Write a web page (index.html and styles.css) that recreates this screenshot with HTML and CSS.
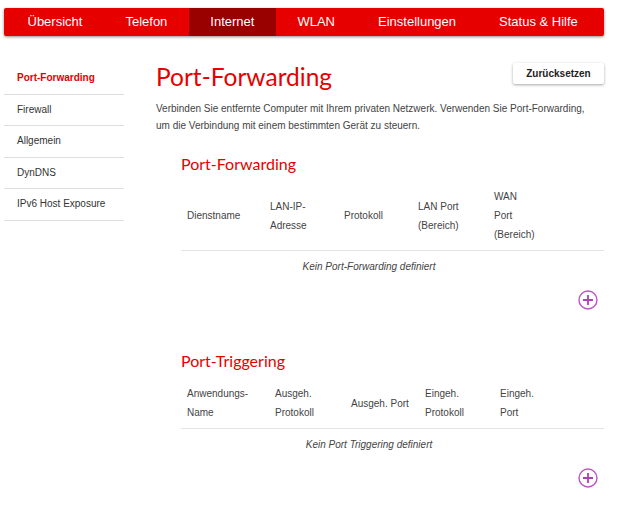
FILE: index.html
```html
<!DOCTYPE html>
<html lang="de">
<head>
<meta charset="utf-8">
<title>Port-Forwarding</title>
<link rel="stylesheet" href="styles.css">
</head>
<body>
<nav class="topnav">
  <a class="nav-item">Übersicht</a>
  <a class="nav-item">Telefon</a>
  <a class="nav-item active">Internet</a>
  <a class="nav-item">WLAN</a>
  <a class="nav-item">Einstellungen</a>
  <a class="nav-item">Status &amp; Hilfe</a>
</nav>
<div class="layout">
  <aside class="sidebar">
    <a class="side-item active">Port-Forwarding</a>
    <a class="side-item">Firewall</a>
    <a class="side-item">Allgemein</a>
    <a class="side-item">DynDNS</a>
    <a class="side-item">IPv6 Host Exposure</a>
  </aside>
  <main class="content">
    <div class="title-row">
      <h1 class="page-title">Port-Forwarding</h1>
      <button class="btn">Zurücksetzen</button>
    </div>
    <p class="intro">Verbinden Sie entfernte Computer mit Ihrem privaten Netzwerk. Verwenden Sie Port-Forwarding, um die Verbindung mit einem bestimmten Gerät zu steuern.</p>

    <section class="section">
      <h2 class="section-title">Port-Forwarding</h2>
      <table class="data">
        <colgroup>
          <col class="w83"><col class="w74"><col class="w74"><col class="w76"><col class="w69"><col class="w47">
        </colgroup>
        <thead>
          <tr>
            <th>Dienstname</th>
            <th>LAN-IP-<br>Adresse</th>
            <th>Protokoll</th>
            <th>LAN Port<br>(Bereich)</th>
            <th>WAN<br>Port<br>(Bereich)</th>
            <th></th>
          </tr>
        </thead>
        <tbody>
          <tr><td class="empty" colspan="5">Kein Port-Forwarding definiert</td><td></td></tr>
        </tbody>
      </table>
      <div class="add-row"><span class="add-btn"><svg width="20" height="20" viewBox="0 0 20 20"><circle cx="10" cy="10" r="9" fill="none" stroke="#c054c6" stroke-width="1.4"/><path d="M10 5v10M5 10h10" stroke="#b040b8" stroke-width="1.8"/></svg></span></div>
    </section>

    <section class="section second">
      <h2 class="section-title">Port-Triggering</h2>
      <table class="data">
        <colgroup>
          <col class="w88"><col class="w76"><col class="w74"><col class="w75"><col class="w63"><col class="w47">
        </colgroup>
        <thead>
          <tr>
            <th>Anwendungs-<br>Name</th>
            <th>Ausgeh.<br>Protokoll</th>
            <th>Ausgeh. Port</th>
            <th>Eingeh.<br>Protokoll</th>
            <th>Eingeh.<br>Port</th>
            <th></th>
          </tr>
        </thead>
        <tbody>
          <tr><td class="empty" colspan="5">Kein Port Triggering definiert</td><td></td></tr>
        </tbody>
      </table>
      <div class="add-row"><span class="add-btn"><svg width="20" height="20" viewBox="0 0 20 20"><circle cx="10" cy="10" r="9" fill="none" stroke="#c054c6" stroke-width="1.4"/><path d="M10 5v10M5 10h10" stroke="#b040b8" stroke-width="1.8"/></svg></span></div>
    </section>
  </main>
</div>
</body>
</html>
```

FILE: styles.css
```css
* { box-sizing: border-box; }
body {
  margin: 0;
  font-family: "Liberation Sans", Arial, sans-serif;
  color: #333;
  background: #fff;
}
.topnav {
  display: flex;
  margin: 8px 13px 0 4px;
  padding-left: 2px;
  height: 28px;
  background: #e60000;
  border-radius: 2px;
  box-shadow: 0 1px 3px rgba(0,0,0,0.45);
}
.nav-item {
  flex: none;
  white-space: nowrap;
  padding: 0 21.5px;
  line-height: 28px;
  font-size: 13px;
  color: #fff;
}
.nav-item.active { background: #990000; }

.layout {
  display: flex;
  margin-top: 27px;
  padding-left: 4px;
}
.sidebar {
  width: 120px;
  flex: none;
  display: flex;
  flex-direction: column;
}
.side-item {
  display: block;
  height: 31.5px;
  line-height: 30px;
  padding-left: 13px;
  font-size: 10px;
  color: #333;
  border-bottom: 1px solid #ddd;
}
.side-item.active { color: #e60000; font-weight: bold; }

.content {
  flex: 1;
  margin-left: 32px;
  margin-right: 13px;
}
.title-row {
  display: flex;
  justify-content: space-between;
  align-items: flex-start;
}
.page-title {
  margin: -1px 0 0;
  font-family: Lato, sans-serif;
  font-weight: 400;
  font-size: 24.5px;
  line-height: 30px;
  color: #e60000;
}
.btn {
  font-family: "Liberation Sans", Arial, sans-serif;
  font-weight: bold;
  font-size: 10px;
  color: #222;
  background: #fff;
  border: none;
  border-radius: 2px;
  width: 91px;
  height: 21px;
  padding: 0;
  box-shadow: 0 1px 3px rgba(0,0,0,0.35);
}
.intro {
  margin: 8px 0 0;
  padding-right: 12px;
  font-size: 10px;
  line-height: 17px;
  color: #444;
}
.section { margin: 19px 0 0 25px; }
.section.second { margin-top: 40px; }
.section-title {
  margin: 0;
  font-family: Lato, sans-serif;
  font-weight: 400;
  font-size: 16px;
  line-height: 22px;
  color: #e60000;
}
.data {
  width: 100%;
  border-collapse: collapse;
  table-layout: fixed;
  margin-top: 6px;
  font-size: 10px;
  color: #444;
}
.w83 { width: 83px; } .w74 { width: 74px; } .w76 { width: 76px; }
.w69 { width: 69px; } .w47 { width: 47px; } .w88 { width: 88px; }
.w75 { width: 75px; } .w63 { width: 63px; }
.data th {
  text-align: left;
  font-weight: normal;
  padding: 6px 6px;
  line-height: 19px;
  vertical-align: middle;
  border-bottom: 1px solid #e4e4e4;
}
.data td.empty {
  text-align: center;
  font-style: italic;
  padding: 8px 0 9px;
  line-height: 16px;
}
.add-row {
  display: flex;
  justify-content: flex-end;
  padding-right: 6px;
  margin-top: 6px;
}
.add-btn { display: block; width: 20px; height: 20px; }
.add-btn svg { display: block; }
```
